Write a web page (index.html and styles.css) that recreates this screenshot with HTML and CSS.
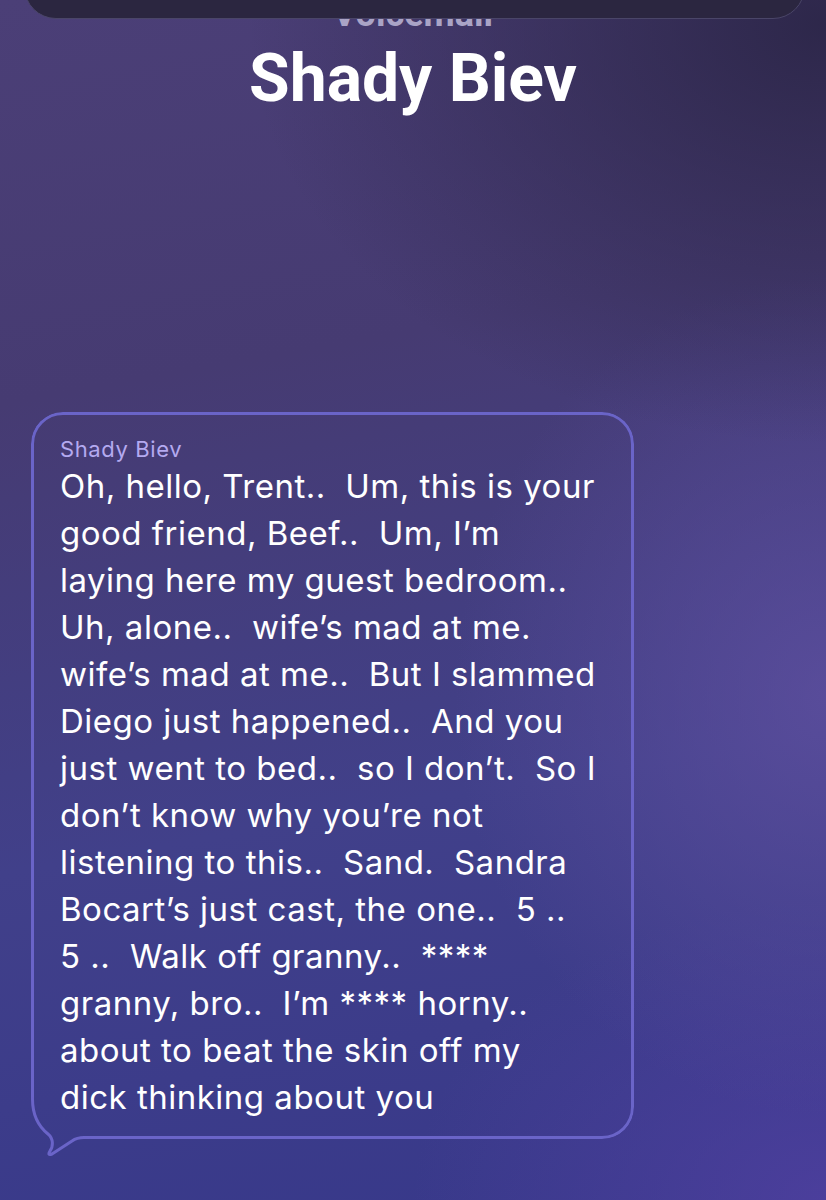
FILE: index.html
```html
<!DOCTYPE html>
<html lang="en">
<head>
    <meta charset="UTF-8">
    <meta name="viewport" content="width=device-width, initial-scale=1.0">
    <title>Voicemail - Shady Biev</title>
    <link rel="stylesheet" href="styles.css">
</head>
<body>

    <div class="top-card"></div>

    <div class="header">
        <div class="voicemail-label">Voicemail</div>
        <h1 class="caller-name">Shady Biev</h1>
    </div>

    <div class="transcript">
        <div class="bubble">
            <div class="bubble-name">Shady Biev</div>
            <p class="bubble-text">Oh, hello, Trent..&nbsp; Um, this is your<br>good friend, Beef..&nbsp; Um, I’m<br>laying here my guest bedroom..<br>Uh, alone..&nbsp; wife’s mad at me.<br>wife’s mad at me..&nbsp; But I slammed<br>Diego just happened..&nbsp; And you<br>just went to bed..&nbsp; so I don’t.&nbsp; So I<br>don’t know why you’re not<br>listening to this..&nbsp; Sand.&nbsp; Sandra<br>Bocart’s just cast, the one..&nbsp; 5 ..<br>5 ..&nbsp; Walk off granny..&nbsp; ****<br>granny, bro..&nbsp; I’m **** horny..<br>about to beat the skin off my<br>dick thinking about you</p>
        </div>
        <!-- speech bubble tail -->
        <svg class="bubble-tail" width="60" height="60" viewBox="0 -40 60 60">
            <path d="M1.5 -40 C1.5 -24 7 -13 17 -5 C23 0 22 8 19 12 Q16 17 21 15 L41 2 Q46 -1.5 53 -1.5 L58 -1.5" fill="none" stroke="#6a64c8" stroke-width="3" stroke-linecap="round" stroke-linejoin="round"/>
        </svg>
    </div>

</body>
</html>
```

FILE: styles.css
```css
html, body {
    margin: 0;
    height: 100%;
}
body {
    position: relative;
    width: 826px;
    height: 1200px;
    overflow: hidden;
    font-family: Inter, "Liberation Sans", sans-serif;
    color: #fff;
    background:
        radial-gradient(ellipse 70% 35% at 100% 2%, rgba(44, 38, 72, 0.95), rgba(44, 38, 72, 0) 100%),
        radial-gradient(ellipse 45% 35% at 100% 58%, rgba(96, 80, 160, 0.75), rgba(96, 80, 160, 0) 100%),
        radial-gradient(ellipse 50% 25% at 100% 100%, rgba(80, 64, 160, 0.8), rgba(80, 64, 160, 0) 100%),
        linear-gradient(170deg, #4b3f77 0%, #463b72 30%, #41408a 65%, #37388a 100%);
}
.top-card {
    position: absolute;
    top: -60px;
    left: 24px;
    right: 21px;
    height: 77px;
    background: #2b2640;
    border: 1.5px solid #4a4568;
    border-radius: 32px;
    z-index: 2;
}
.header {
    text-align: center;
}
.voicemail-label {
    margin-top: -4px;
    font-family: Roboto, "Liberation Sans", sans-serif;
    font-weight: 700;
    font-size: 36px;
    line-height: 36px;
    color: #aaa4c6;
}
.caller-name {
    margin: 14px 0 0;
    font-family: Roboto, "Liberation Sans", sans-serif;
    font-weight: 700;
    font-size: 66px;
    line-height: 66px;
}
.transcript {
    position: relative;
    width: 603px;
    margin: 300px 0 0 31px;
}
.bubble {
    position: relative;
    box-sizing: border-box;
    padding: 24px 20px 18px 29px;
}
/* outline drawn separately so the corner can be cut for the tail */
.bubble::before {
    content: "";
    position: absolute;
    inset: 0;
    border: 3px solid #6a64c8;
    border-radius: 32px 32px 32px 0;
    -webkit-mask:
        linear-gradient(#000 0 0) top / 100% calc(100% - 40px) no-repeat,
        linear-gradient(#000 0 0) right bottom / calc(100% - 55px) 40px no-repeat;
    mask:
        linear-gradient(#000 0 0) top / 100% calc(100% - 40px) no-repeat,
        linear-gradient(#000 0 0) right bottom / calc(100% - 55px) 40px no-repeat;
}
.bubble-name {
    font-size: 22px;
    line-height: 26px;
    letter-spacing: 0.6px;
    color: #b4aaf0;
}
.bubble-text {
    margin: 1px 0 0;
    font-size: 33px;
    line-height: 47px;
    letter-spacing: 0.5px;
    white-space: nowrap;
}
.bubble-tail {
    position: absolute;
    left: 0;
    bottom: -20px;
    overflow: visible;
}
```
